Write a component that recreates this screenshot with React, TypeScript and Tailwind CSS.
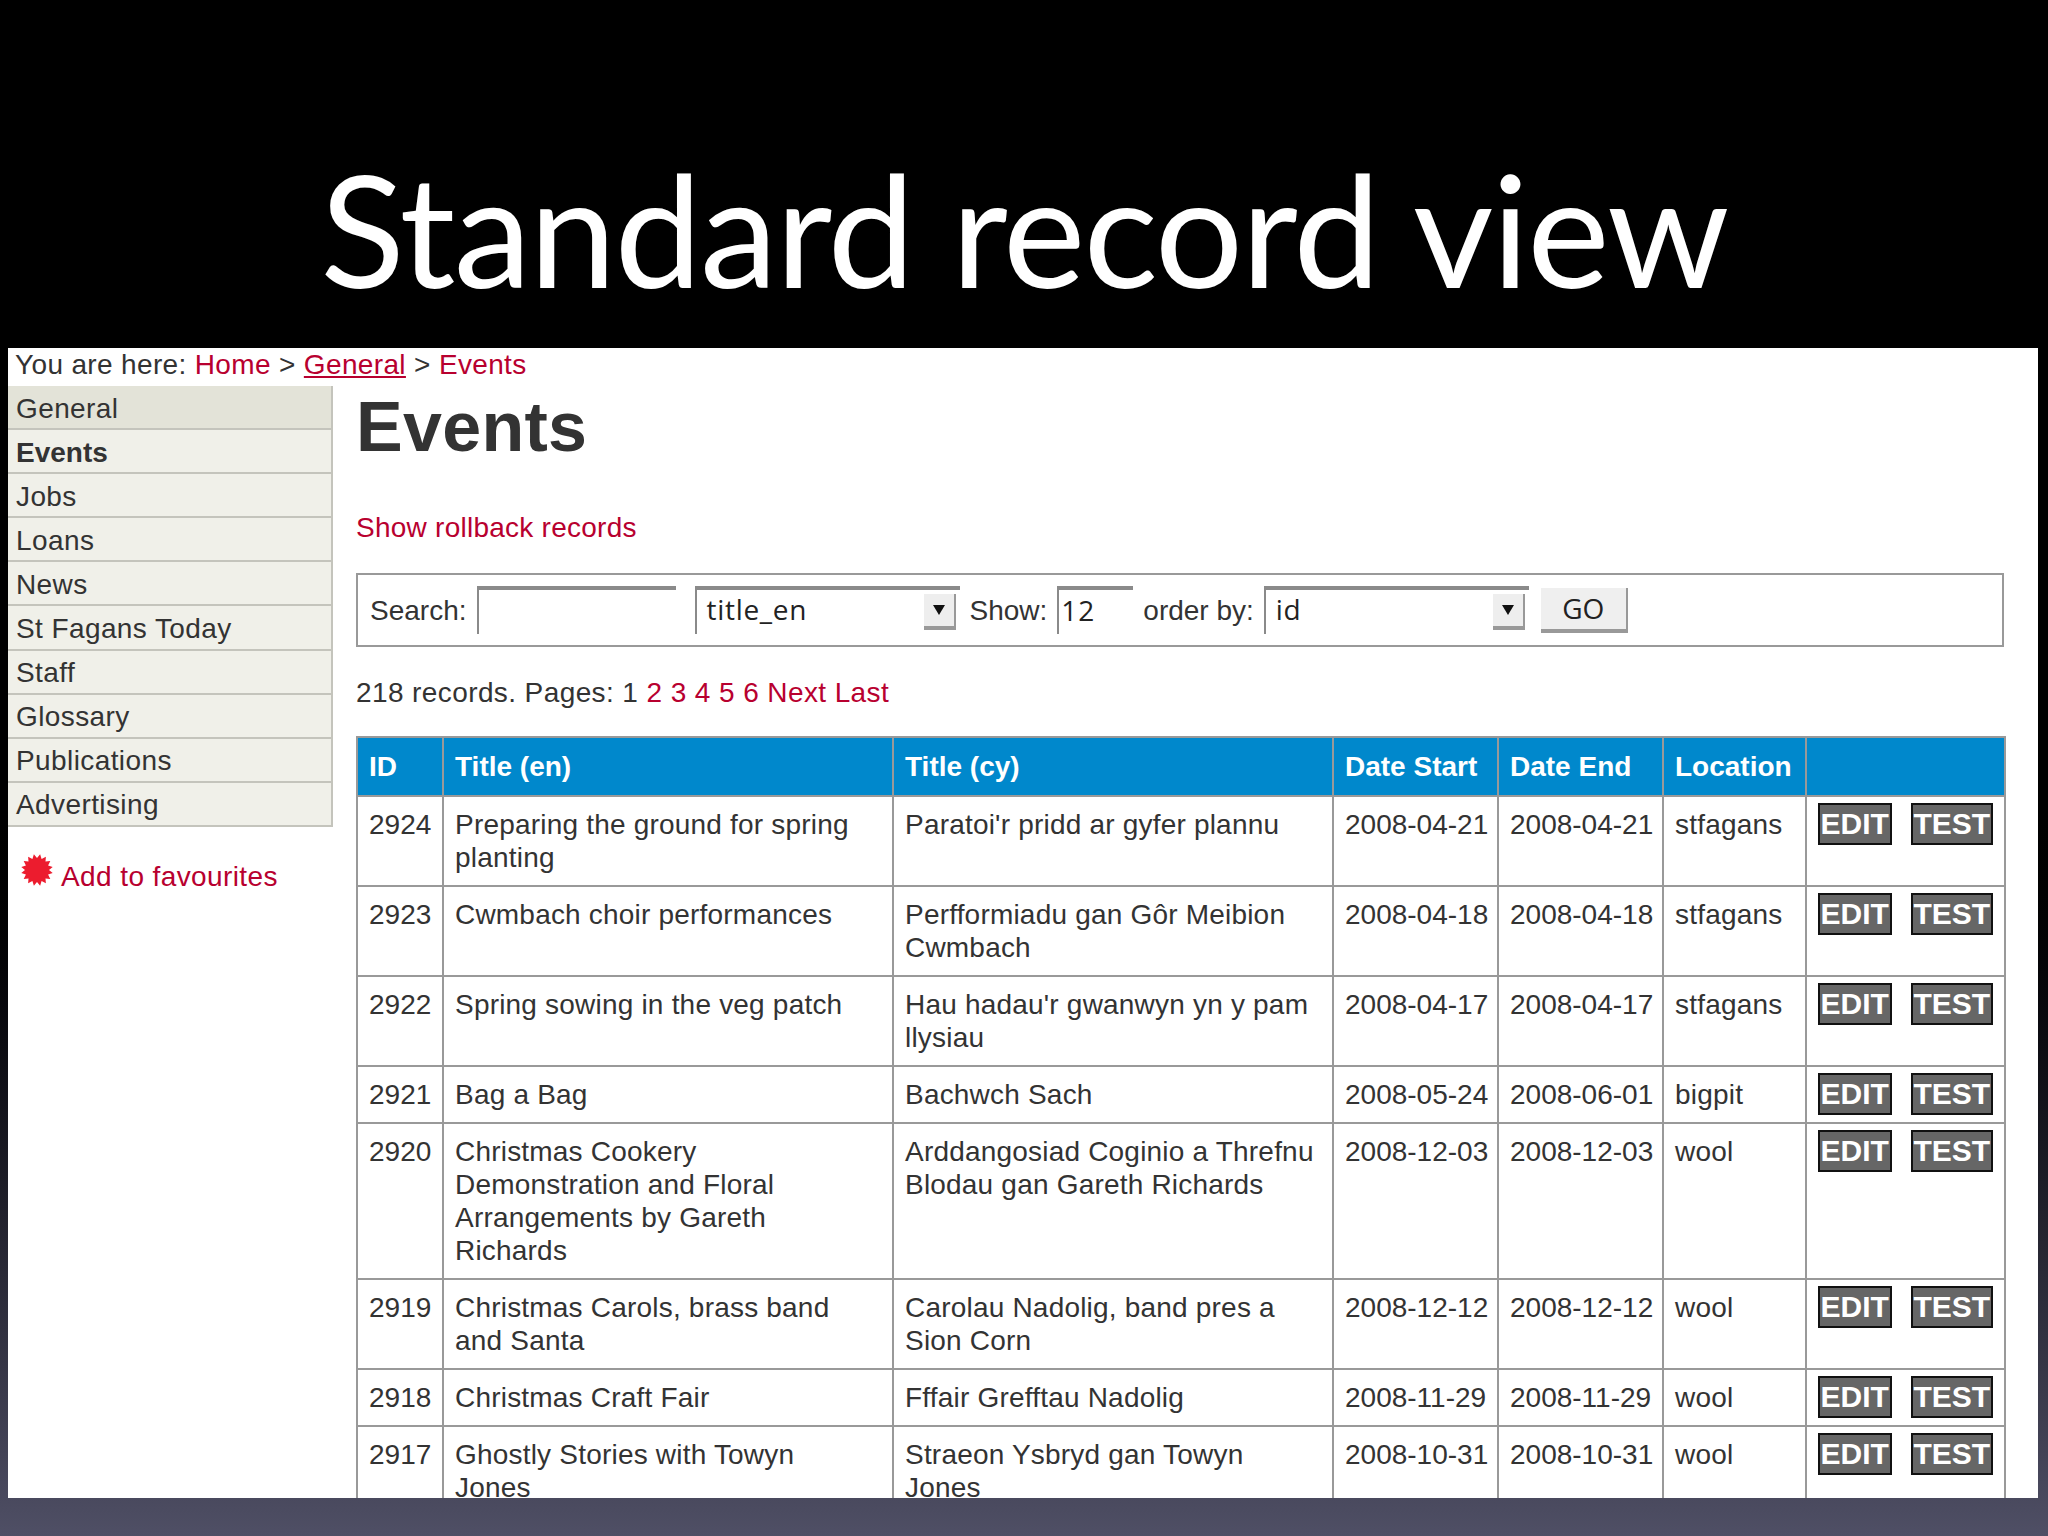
const menu = ["General", "Events", "Jobs", "Loans", "News", "St Fagans Today", "Staff", "Glossary", "Publications", "Advertising"];

const rows = [
  ["2924", "Preparing the ground for spring planting", "Paratoi'r pridd ar gyfer plannu", "2008-04-21", "2008-04-21", "stfagans"],
  ["2923", "Cwmbach choir performances", "Perfformiadu gan Gôr Meibion Cwmbach", "2008-04-18", "2008-04-18", "stfagans"],
  ["2922", "Spring sowing in the veg patch", "Hau hadau'r gwanwyn yn y pam llysiau", "2008-04-17", "2008-04-17", "stfagans"],
  ["2921", "Bag a Bag", "Bachwch Sach", "2008-05-24", "2008-06-01", "bigpit"],
  ["2920", "Christmas Cookery Demonstration and Floral Arrangements by Gareth Richards", "Arddangosiad Coginio a Threfnu Blodau gan Gareth Richards", "2008-12-03", "2008-12-03", "wool"],
  ["2919", "Christmas Carols, brass band and Santa", "Carolau Nadolig, band pres a Sion Corn", "2008-12-12", "2008-12-12", "wool"],
  ["2918", "Christmas Craft Fair", "Fffair Grefftau Nadolig", "2008-11-29", "2008-11-29", "wool"],
  ["2917", "Ghostly Stories with Towyn Jones", "Straeon Ysbryd gan Towyn Jones", "2008-10-31", "2008-10-31", "wool"],
];

const headers = ["ID", "Title (en)", "Title (cy)", "Date Start", "Date End", "Location", ""];

// cell padding differs a bit per column so titles wrap where the reference does
const cellClasses = [
  "whitespace-nowrap",
  "pr-[24px] tracking-[0.2px]",
  "tracking-[0.2px]",
  "whitespace-nowrap",
  "whitespace-nowrap",
  "tracking-[0.2px]",
];

// inset field like the browser's default text box
const fieldClass = "h-[48px] border-t-4 border-l-2 border-t-[#8a8a8a] border-l-[#8a8a8a] bg-white text-[#222]";

function FakeSelect({ value, width }: { value: string; width: string }) {
  return (
    <div className={`${fieldClass} ${width} flex items-center justify-between pl-[10px] pr-[4px] font-['Open_Sans',sans-serif] text-[28px] tracking-[0.7px]`}>
      <span className="mb-[5px]">{value}</span>
      <span className="flex h-[36px] w-[32px] items-center justify-center border-r-2 border-b-4 border-[#999] bg-[#eee]">
        <svg width="16" height="16" viewBox="0 0 16 16">
          <path d="M2 3h12l-6 10z" fill="#111" />
        </svg>
      </span>
    </div>
  );
}

function Burst() {
  const points: string[] = [];
  for (let i = 0; i < 32; i++) {
    const r = i % 2 ? 16 : 12;
    const a = (i * Math.PI) / 16;
    points.push(`${16 + r * Math.cos(a)},${16 + r * Math.sin(a)}`);
  }
  return (
    <svg width="32" height="32" viewBox="0 0 32 32" className="shrink-0">
      <polygon points={points.join(" ")} fill="#ec1c2e" />
    </svg>
  );
}

export default function App() {
  return (
    <div className="flex h-[1536px] w-[2048px] flex-col overflow-hidden bg-gradient-to-b from-black from-50% to-[#4f4f65] font-['Liberation_Sans',sans-serif] text-[28px] leading-[33px] text-[#333]">
      <h1 className="flex h-[348px] shrink-0 items-end justify-center bg-black pb-[20px] font-['Lato',sans-serif] text-[156px] leading-[200px] font-normal tracking-[-1.85px] text-white">
        Standard record view
      </h1>

      <div className="ml-[8px] h-[1150px] w-[2030px] shrink-0 overflow-hidden bg-white">
        <div className="flex h-[38px] items-center pb-[5px] pl-[7px] tracking-[0.35px]">
          <span>You are here:&nbsp;</span>
          <a className="text-[#b8002f]">Home</a>
          <span>&nbsp;&gt;&nbsp;</span>
          <a className="text-[#b8002f] underline">General</a>
          <span>&nbsp;&gt;&nbsp;</span>
          <a className="text-[#b8002f]">Events</a>
        </div>

        <div className="flex">
          <div className="w-[325px] shrink-0">
            <ul className="border-r-2 border-[#c4c4bc] tracking-[0.4px]">
              {menu.map((item, i) => (
                <li
                  key={item}
                  className={`flex h-[44.1px] items-center border-b-2 border-[#c4c4bc] pt-[2px] pl-[8px] ${i === 0 ? "bg-[#e3e3d8]" : "bg-[#f0f0e9]"} ${i === 1 ? "font-bold tracking-normal" : ""}`}
                >
                  {item}
                </li>
              ))}
            </ul>
            <div className="mt-[27px] flex items-start gap-[8px] pl-[13px] tracking-[0.4px] text-[#b8002f]">
              <Burst />
              <span className="mt-[6px]">Add to favourites</span>
            </div>
          </div>

          <div className="ml-[23px] w-[1648px] shrink-0">
            <h2 className="h-[87px] pt-[1px] text-[70px] leading-[80px] font-bold tracking-[0.3px] text-[#333]">Events</h2>
            <p className="mt-[38px] tracking-[0.25px] text-[#b8002f]">Show rollback records</p>

            <div className="mt-[29px] flex h-[74px] items-center border-2 border-[#999] pl-[12px]">
              <span>Search:</span>
              <input className={`${fieldClass} ml-[10px] w-[199px] outline-none`} />
              <div className="ml-[19px]">
                <FakeSelect value="title_en" width="w-[265px]" />
              </div>
              <span className="ml-[10px]">Show:</span>
              <input
                readOnly
                value="12"
                className={`${fieldClass} ml-[10px] w-[76px] pb-[5px] pl-[2px] font-['Open_Sans',sans-serif] text-[28px] tracking-[1px] outline-none`}
              />
              <span className="ml-[10px]">order by:</span>
              <div className="ml-[10px]">
                <FakeSelect value="id" width="w-[265px]" />
              </div>
              <button className="mt-[1px] ml-[12px] h-[45px] w-[87px] border-r-2 border-b-4 border-[#999] bg-[#efefef] font-['Open_Sans',sans-serif] text-[28px] text-[#222]">
                GO
              </button>
            </div>

            <p className="mt-[29px] tracking-[0.4px]">
              218 records. Pages: 1 <span className="text-[#b8002f]">2 3 4 5 6 Next Last</span>
            </p>

            <table className="mt-[27px] w-[1648px] table-fixed border-collapse">
              <colgroup>
                <col className="w-[86px]" />
                <col className="w-[450px]" />
                <col className="w-[440px]" />
                <col className="w-[165px]" />
                <col className="w-[165px]" />
                <col className="w-[143px]" />
                <col className="w-[199px]" />
              </colgroup>
              <thead>
                <tr className="h-[59px] bg-[#0088cc] text-white">
                  {headers.map((h, i) => (
                    <th key={i} className="border-2 border-[#999] px-[11px] text-left font-bold">
                      {h}
                    </th>
                  ))}
                </tr>
              </thead>
              <tbody>
                {rows.map((row) => (
                  <tr key={row[0]}>
                    {row.map((cell, i) => (
                      <td key={i} className={`border-2 border-[#999] px-[11px] py-[11px] align-top ${cellClasses[i]}`}>
                        {cell}
                      </td>
                    ))}
                    <td className="border-2 border-[#999] px-[11px] pt-[6px] align-top">
                      <div className="flex gap-[19px] text-[30px] leading-[36px] font-bold text-white">
                        <span className="flex h-[42px] w-[74px] items-center justify-center border-2 border-[#111] bg-[#666]">EDIT</span>
                        <span className="flex h-[42px] w-[83px] items-center justify-center border-2 border-[#111] bg-[#666]">TEST</span>
                      </div>
                    </td>
                  </tr>
                ))}
              </tbody>
            </table>
          </div>
        </div>
      </div>
    </div>
  );
}
